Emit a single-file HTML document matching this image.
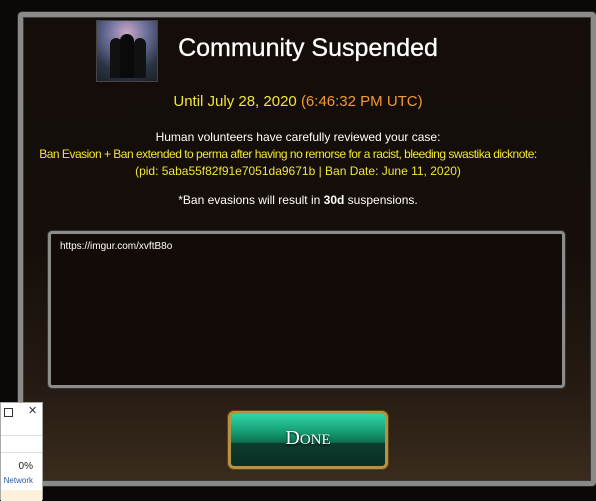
<!DOCTYPE html>
<html><head><style>
body{margin:0;width:596px;height:500px;overflow:hidden;background:#0c0806;position:relative;font-family:"Liberation Sans",sans-serif}
.frame{position:absolute;left:18px;top:12px;width:568px;height:464px;border:5px solid #8a8a88;border-radius:4px;box-shadow:inset 0 0 0 1px #3a3a38,0 0 0 1px #2a2a28;background:linear-gradient(#140d09 0%,#150e0a 50%,#241a12 78%,#3a2b1d 100%)}
.t{position:absolute;left:0;width:596px;text-align:center;white-space:nowrap}
.box{position:absolute;left:48px;top:231px;width:511px;height:151px;border:3px solid #8c8c8a;border-radius:4px;background:#120b08;box-shadow:0 0 0 1px #333}
.btn{position:absolute;left:228px;top:411px;width:154px;height:52px;border:3px solid #b8923f;border-radius:6px;background:linear-gradient(#2fd6a6 0%,#159c73 35%,#0f6d50 55%,#0b3d2e 56%,#0b2e24 100%);box-shadow:0 0 0 1px #5a4416}
</style></head><body>
<div class="frame"></div>
<div style="position:absolute;left:96px;top:20px;width:60px;height:60px;background:radial-gradient(circle at 50% 20%,#c9a8c8 0%,#6b6f9a 35%,#2b3444 70%,#1a2228 100%);border:1px solid #444"></div>
<div style="position:absolute;left:110px;top:38px;width:12px;height:40px;background:#111;border-radius:6px 6px 0 0"></div>
<div style="position:absolute;left:120px;top:34px;width:14px;height:44px;background:#0a0a0c;border-radius:7px 7px 0 0"></div>
<div style="position:absolute;left:134px;top:38px;width:12px;height:40px;background:#111;border-radius:6px 6px 0 0"></div>
<div class="t" style="top:34px;left:10px;font-size:25px;color:#fff;-webkit-text-stroke:0.3px #fff">Community Suspended</div>
<div class="t" style="top:93px;font-size:15px;color:#f1e638">Until July 28, 2020 <span style="color:#f39a2c">(6:46:32 PM UTC)</span></div>
<div class="t" style="top:130px;font-size:12px;color:#fff">Human volunteers have carefully reviewed your case:</div>
<div class="t" style="top:147px;font-size:12px;color:#f1e638;letter-spacing:-0.5px;left:-10px">Ban Evasion + Ban extended to perma after having no remorse for a racist, bleeding swastika dicknote:</div>
<div class="t" style="top:164px;font-size:12px;color:#f1e638">(pid: 5aba55f82f91e7051da9671b | Ban Date: June 11, 2020)</div>
<div class="t" style="top:193px;font-size:12px;color:#fff">*Ban evasions will result in <b>30d</b> suspensions.</div>
<div class="box"><div style="position:absolute;left:9px;top:7px;font-size:10px;color:#fff">https://imgur.com/xvftB8o</div></div>
<div class="btn"><div style="position:absolute;left:0;right:0;top:13px;text-align:center;color:#fff;font-size:20px;font-family:'Liberation Serif',serif;text-shadow:0 1px 2px #000">D<span style="font-size:15px">ONE</span></div></div>
<div style="position:absolute;left:0;top:402px;width:43px;height:98px;background:#fff;border:1px solid #aaa;box-sizing:border-box">
<div style="position:absolute;left:3px;top:5px;width:7px;height:7px;border:1px solid #333"></div>
<div style="position:absolute;left:27px;top:1px;font-size:11px;color:#333">✕</div>
<div style="position:absolute;left:0;right:0;top:32px;border-top:1px solid #ddd"></div>
<div style="position:absolute;left:0;right:0;top:49px;border-top:1px solid #ddd"></div>
<div style="position:absolute;right:9px;top:58px;font-size:10px;color:#222">0%</div>
<div style="position:absolute;right:9px;top:73px;font-size:8px;color:#2a5a9a">Network</div>
<div style="position:absolute;left:0;right:0;top:87px;height:11px;background:#fdf1dc"></div>
</div>
</body></html>
